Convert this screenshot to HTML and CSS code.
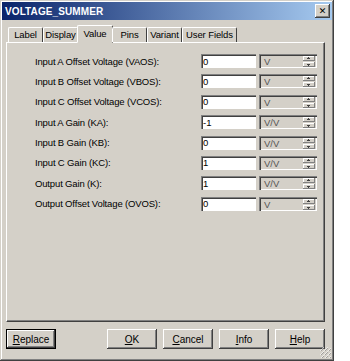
FILE: index.html
```html
<!DOCTYPE html>
<html lang="en">
<head>
    <meta charset="UTF-8">
    <title>VOLTAGE_SUMMER</title>
    <link rel="stylesheet" href="styles.css">
</head>
<body>
    <div class="window">
        <div class="titlebar">
            <span class="title">VOLTAGE_SUMMER</span>
            <button class="close">&#x2715;</button>
        </div>

        <div class="tabs">
            <div class="tab">Label</div>
            <div class="tab">Display</div>
            <div class="tab active">Value</div>
            <div class="tab">Pins</div>
            <div class="tab">Variant</div>
            <div class="tab wide">User Fields</div>
        </div>

        <div class="panel">
            <div class="row">
                <label>Input A Offset Voltage (VAOS):</label>
                <input class="field" type="text" value="0">
                <div class="unit"><span>V</span><div class="spin"><i class="up"></i><i class="down"></i></div></div>
            </div>
            <div class="row">
                <label>Input B Offset Voltage (VBOS):</label>
                <input class="field" type="text" value="0">
                <div class="unit"><span>V</span><div class="spin"><i class="up"></i><i class="down"></i></div></div>
            </div>
            <div class="row">
                <label>Input C Offset Voltage (VCOS):</label>
                <input class="field" type="text" value="0">
                <div class="unit"><span>V</span><div class="spin"><i class="up"></i><i class="down"></i></div></div>
            </div>
            <div class="row">
                <label>Input A Gain (KA):</label>
                <input class="field" type="text" value="-1">
                <div class="unit"><span>V/V</span><div class="spin"><i class="up"></i><i class="down"></i></div></div>
            </div>
            <div class="row">
                <label>Input B Gain (KB):</label>
                <input class="field" type="text" value="0">
                <div class="unit"><span>V/V</span><div class="spin"><i class="up"></i><i class="down"></i></div></div>
            </div>
            <div class="row">
                <label>Input C Gain (KC):</label>
                <input class="field" type="text" value="1">
                <div class="unit"><span>V/V</span><div class="spin"><i class="up"></i><i class="down"></i></div></div>
            </div>
            <div class="row">
                <label>Output Gain (K):</label>
                <input class="field" type="text" value="1">
                <div class="unit"><span>V/V</span><div class="spin"><i class="up"></i><i class="down"></i></div></div>
            </div>
            <div class="row">
                <label>Output Offset Voltage (OVOS):</label>
                <input class="field" type="text" value="0">
                <div class="unit"><span>V</span><div class="spin"><i class="up"></i><i class="down"></i></div></div>
            </div>
        </div>

        <div class="buttons">
            <button class="btn default"><u>R</u>eplace</button>
            <div class="spacer"></div>
            <button class="btn"><u>O</u>K</button>
            <button class="btn"><u>C</u>ancel</button>
            <button class="btn"><u>I</u>nfo</button>
            <button class="btn"><u>H</u>elp</button>
        </div>
        <div class="grip"></div>
    </div>
</body>
</html>
```

FILE: styles.css
```css
body {
    margin: 0;
    background: #fff;
    font-family: 'Liberation Sans', Arial, sans-serif;
    font-size: 9.5px;
    color: #000;
}

.window {
    position: relative;
    width: 334px;
    height: 361px;
    box-sizing: border-box;
    padding: 2px;
    background: #d4d0c8;
    box-shadow: inset -1px -1px #404040, inset 1px 1px #d4d0c8,
                inset -2px -2px #808080, inset 2px 2px #fff;
    display: flex;
    flex-direction: column;
}

.titlebar {
    height: 18px;
    display: flex;
    align-items: center;
    justify-content: space-between;
    padding: 0 2px 0 3px;
    background: linear-gradient(to right, #0a246a, #a6caf0);
}

.titlebar .title {
    color: #fff;
    font-weight: bold;
    font-size: 10px;
    letter-spacing: 0.1px;
}

.close {
    width: 15px;
    height: 14px;
    padding: 0;
    border: none;
    background: #d4d0c8;
    box-shadow: inset -1px -1px #404040, inset 1px 1px #fff, inset -2px -2px #808080;
    font-size: 9px;
    font-weight: bold;
    line-height: 14px;
    font-family: 'DejaVu Sans', sans-serif;
    color: #000;
}

.tabs {
    display: flex;
    margin: 6px 0 0 6px;
    height: 16px;
    align-items: flex-end;
    position: relative;
    z-index: 1;
}

.tab {
    width: 35px;
    height: 15px;
    box-sizing: border-box;
    text-align: center;
    white-space: nowrap;
    line-height: 14px;
    letter-spacing: -0.1px;
    border-top: 1px solid #fff;
    border-left: 1px solid #fff;
    border-right: 1px solid #404040;
    border-radius: 2px 2px 0 0;
}

.tab.wide {
    width: 55px;
}

.tab.active {
    width: 36px;
    height: 18px;
    margin: 0 -1px -1px -1px;
    line-height: 15px;
    background: #d4d0c8;
    border-bottom: 1px solid #d4d0c8;
}

.panel {
    margin: 0 7px 0 4px;
    height: 280px;
    box-sizing: border-box;
    border-top: 1px solid #fff;
    border-left: 1px solid #fff;
    border-right: 1px solid #404040;
    border-bottom: 1px solid #404040;
    box-shadow: inset -1px -1px #808080;
    padding: 11px 0 0 28px;
    display: flex;
    flex-direction: column;
    gap: 6.4px;
}

.row {
    display: flex;
    align-items: center;
    height: 14px;
}

.row label {
    width: 166px;
    letter-spacing: -0.15px;
}

.field {
    width: 55px;
    height: 14px;
    box-sizing: border-box;
    margin: 0;
    padding: 0 0 0 2px;
    border: none;
    background: #fff;
    box-shadow: inset 1px 1px #808080, inset 2px 2px #404040, inset -1px -1px #fff;
    font-family: inherit;
    font-size: 9.5px;
}

.unit {
    width: 58px;
    height: 14px;
    margin-left: 3px;
    box-sizing: border-box;
    box-shadow: inset 1px 1px #808080, inset 2px 2px #404040, inset -1px -1px #fff;
    display: flex;
    align-items: center;
    justify-content: space-between;
    padding: 1px 2px 0 5px;
    color: #555;
}

.spin {
    width: 12px;
    height: 11px;
    display: flex;
    flex-direction: column;
    justify-content: space-between;
}

.spin i {
    height: 5px;
    box-sizing: border-box;
    box-shadow: inset -1px -1px #808080, inset 1px 1px #fff;
    position: relative;
}

.spin i::after {
    content: '';
    position: absolute;
    left: 4px;
    top: 2px;
    width: 3px;
    height: 1px;
    background: #404040;
}

.spin i.up::before,
.spin i.down::before {
    content: '';
    position: absolute;
    left: 5px;
    width: 1px;
    height: 1px;
    background: #404040;
}

.spin i.up::before {
    top: 1px;
}

.spin i.down::before {
    top: 3px;
}

.buttons {
    display: flex;
    gap: 6px;
    margin: 7px 7px 0 4px;
}

.spacer {
    flex: 1;
}

.btn {
    width: 50px;
    height: 20px;
    padding: 0;
    border: none;
    background: #d4d0c8;
    box-shadow: inset -1px -1px #404040, inset 1px 1px #fff, inset -2px -2px #808080;
    font-family: inherit;
    font-size: 10px;
    color: #000;
}

.btn.default {
    box-shadow: inset 0 0 0 1px #000, inset -2px -2px #404040, inset 2px 2px #fff, inset -3px -3px #808080;
}

.grip {
    position: absolute;
    right: 3px;
    bottom: 3px;
    width: 11px;
    height: 11px;
    background: linear-gradient(135deg, transparent 45%, #fff 45%, #fff 55%, #808080 55%, #808080 65%, transparent 65%);
    background-size: 4px 4px;
    opacity: 0.6;
}
```
